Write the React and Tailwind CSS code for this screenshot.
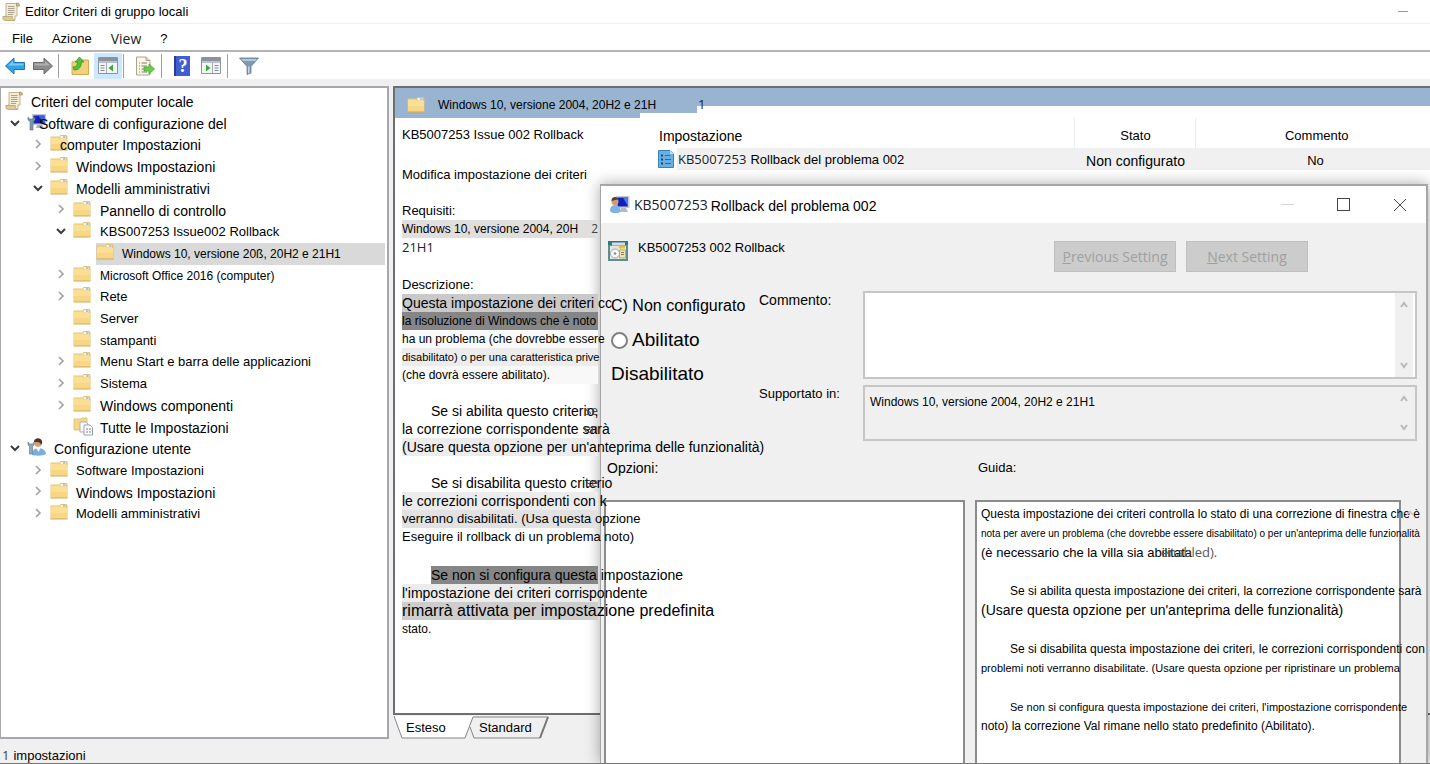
import React, { useState } from 'react';
import clsx from 'clsx';

const tree = [
    { label: 'Criteri del computer locale', icon: 'scroll', pad: 'pl-[4px]', gap: 'gap-[8px]', size: 'text-[14px]' },
    { label: 'Software di configurazione del', icon: 'computer', pad: 'pl-[7px]', gap: '-space-x-2', size: 'text-[14px]', state: 'open' },
    { label: 'computer Impostazioni', icon: 'folder', pad: 'pl-[30px]', gap: '-space-x-2', size: 'text-[14px]', state: 'closed' },
    { label: 'Windows Impostazioni', icon: 'folder', pad: 'pl-[30px]', gap: 'gap-[8px]', size: 'text-[14px]', state: 'closed' },
    { label: 'Modelli amministrativi', icon: 'folder', pad: 'pl-[30px]', gap: 'gap-[8px]', size: 'text-[14px]', state: 'open' },
    { label: 'Pannello di controllo', icon: 'folder', pad: 'pl-[53px]', gap: 'gap-[9px]', size: 'text-[14px]', state: 'closed' },
    { label: 'KBS007253 Issue002 Rollback', icon: 'folder', pad: 'pl-[53px]', gap: 'gap-[9px]', size: 'text-[13px]', state: 'open' },
    { label: 'Windows 10, versione 20ß, 20H2 e 21H1', icon: 'folder', pad: 'pl-[76px]', gap: 'gap-[8px]', size: 'text-[12px]', selected: true },
    { label: 'Microsoft Office 2016 (computer)', icon: 'folder', pad: 'pl-[53px]', gap: 'gap-[9px]', size: 'text-[12px]', state: 'closed' },
    { label: 'Rete', icon: 'folder', pad: 'pl-[53px]', gap: 'gap-[9px]', size: 'text-[13px]', state: 'closed' },
    { label: 'Server', icon: 'folder', pad: 'pl-[53px]', gap: 'gap-[9px]', size: 'text-[13px]' },
    { label: 'stampanti', icon: 'folder', pad: 'pl-[53px]', gap: 'gap-[9px]', size: 'text-[13px]' },
    { label: 'Menu Start e barra delle applicazioni', icon: 'folder', pad: 'pl-[53px]', gap: 'gap-[9px]', size: 'text-[13px]', state: 'closed' },
    { label: 'Sistema', icon: 'folder', pad: 'pl-[53px]', gap: 'gap-[9px]', size: 'text-[13px]', state: 'closed' },
    { label: 'Windows componenti', icon: 'folder', pad: 'pl-[53px]', gap: 'gap-[9px]', size: 'text-[14px]', state: 'closed' },
    { label: 'Tutte le Impostazioni', icon: 'pages', pad: 'pl-[53px]', gap: 'gap-[9px]', size: 'text-[14px]' },
    { label: 'Configurazione utente', icon: 'user', pad: 'pl-[7px]', gap: 'gap-[7px]', size: 'text-[14px]', state: 'open' },
    { label: 'Software Impostazioni', icon: 'folder', pad: 'pl-[30px]', gap: 'gap-[8px]', size: 'text-[13px]', state: 'closed' },
    { label: 'Windows Impostazioni', icon: 'folder', pad: 'pl-[30px]', gap: 'gap-[8px]', size: 'text-[14px]', state: 'closed' },
    { label: 'Modelli amministrativi', icon: 'folder', pad: 'pl-[30px]', gap: 'gap-[8px]', size: 'text-[13px]', state: 'closed' },
];

const description = [
    { lines: [{ text: 'KB5007253 Issue 002 Rollback', cls: 'text-[13px]' }], space: 'mb-[22px]' },
    { lines: [{ text: 'Modifica impostazione dei criteri', cls: 'text-[13px]' }], space: 'mb-[18px]' },
    {
        lines: [
            { text: 'Requisiti:', cls: 'text-[13px]' },
            { text: 'Windows 10, versione 2004, 20H', cls: 'text-[12px] bg-[#e0dfde]', tail: '2' },
            { text: '21H1', cls: "text-[13px] text-[#222] font-medium font-['Open_Sans',sans-serif]" },
        ],
        space: 'mb-[20px]',
    },
    {
        lines: [
            { text: 'Descrizione:', cls: 'text-[13px]' },
            { text: 'Questa impostazione dei criteri cc', cls: 'text-[14px] bg-[#c9c9c9]' },
            { text: 'la risoluzione di Windows che è noto', cls: 'text-[12px] bg-[#868686]' },
            { text: 'ha un problema (che dovrebbe essere', cls: 'text-[12px] bg-[#fafafa]' },
            { text: 'disabilitato) o per una caratteristica prive', cls: 'text-[11px] bg-[#ececec]' },
            { text: '(che dovrà essere abilitato).', cls: 'text-[12px] bg-[#f8f8f8]' },
        ],
        space: 'mb-[18px]',
    },
    {
        lines: [
            { text: 'Se si abilita questo criterio,', cls: 'text-[14px]', indent: true, tail: 'se' },
            { text: 'la correzione corrispondente sarà', cls: 'text-[14px]', tail: 'en' },
            { text: "(Usare questa opzione per un'anteprima delle funzionalità)", cls: 'text-[14px] bg-[#ececec]' },
        ],
        space: 'mb-[18px]',
    },
    {
        lines: [
            { text: 'Se si disabilita questo criterio', cls: 'text-[14px]', indent: true, tail: 'se' },
            { text: 'le correzioni corrispondenti con k', cls: 'text-[14px] bg-[#ececec]' },
            { text: 'verranno disabilitati. (Usa questa opzione', cls: 'text-[13px] bg-[#e2e2e2]' },
            { text: 'Eseguire il rollback di un problema noto)', cls: 'text-[13px]' },
        ],
        space: 'mb-[20px]',
    },
    {
        lines: [
            { text: 'Se non si configura questa impostazione', cls: 'text-[14px] bg-[#868686]', indent: true },
            { text: "l'impostazione dei criteri corrispondente", cls: 'text-[14px] bg-[#ececec]' },
            { text: 'rimarrà attivata per impostazione predefinita', cls: 'text-[16px] bg-[#cdcdcd]' },
            { text: 'stato.', cls: 'text-[12px]' },
        ],
        space: '',
    },
];

const help = [
    [
        { text: 'Questa impostazione dei criteri controlla lo stato di una correzione di finestra che è', cls: 'text-[12px]' },
        { text: "nota per avere un problema (che dovrebbe essere disabilitato) o per un'anteprima delle funzionalità", cls: 'text-[10px]' },
        { text: '(è necessario che la villa sia abilitata', cls: 'text-[13px]', tail: 'enabled).' },
    ],
    [
        { text: 'Se si abilita questa impostazione dei criteri, la correzione corrispondente sarà', cls: 'text-[12px] pl-[29px]' },
        { text: "(Usare questa opzione per un'anteprima delle funzionalità)", cls: 'text-[14px]' },
    ],
    [
        { text: 'Se si disabilita questa impostazione dei criteri, le correzioni corrispondenti con', cls: 'text-[12px] pl-[29px]' },
        { text: 'problemi noti verranno disabilitate. (Usare questa opzione per ripristinare un problema', cls: 'text-[11px]' },
    ],
    [
        { text: "Se non si configura questa impostazione dei criteri, l'impostazione corrispondente", cls: 'text-[11px] pl-[29px]' },
        { text: 'noto) la correzione Val rimane nello stato predefinito (Abilitato).', cls: 'text-[12px]' },
    ],
];

const FolderIcon = () => (
    <svg width="18" height="18" viewBox="0 0 18 18" className="shrink-0">
        <path d="M.500 2.500h9l1-1.500h6l1 1.500V16H.500z" fill="#e3c277" />
        <path d="M10.500 2h5.500v2.500h-5.500z" fill="#fff6d8" />
        <path d="M13 2.500h2.500v1H13z" fill="#5a9bd0" />
        <path d="M1 3.500h8.500l1 1.500H17v10.500H1z" fill="#fbdf95" />
        <path d="M1 10h16v5.500H1z" fill="#f7d684" />
        <path d="M.500 16h17" stroke="#d0ab5c" />
    </svg>
);

const ScrollIcon = () => (
    <svg width="18" height="20" viewBox="0 0 18 20" className="shrink-0">
        <path d="M4 1.500h11V14h-2v4H3v-4h1z" fill="#f3ecd2" stroke="#c0b48e" />
        <path d="M14.500 1c2.500 0 3 1 3 3h-3z" fill="#cdbb84" stroke="#a1925f" strokeWidth=".7" />
        <path d="M.800 14.500h9.500c0 3 1 4 2.500 4H3c-1.500 0-2.200-1-2.200-4z" fill="#dccb98" stroke="#b5a672" strokeWidth=".8" />
        <path d="M6 4.500h6.500M6 6.500h6.500M6 8.500h6.500M6 10.500h6.500M6 12.500h5" stroke="#a9a48f" />
    </svg>
);

const ComputerIcon = () => (
    <svg width="20" height="18" viewBox="0 0 20 18" className="shrink-0">
        <path d="M5 1h14v11H5z" fill="#c3c8d0" />
        <path d="M6.500 2.500h11v8h-11z" fill="#1523b8" />
        <path d="M11 2.500h6.500v8z" fill="#3a62e8" />
        <path d="M1 4v3l2 1.500V17h3V8.500L8 7V4L6.500 6h-4z" fill="#7f97ad" stroke="#5b7186" strokeWidth=".6" />
        <path d="M10 12h5l2 3H9z" fill="#a9b0b8" />
    </svg>
);

const UserIcon = () => (
    <svg width="20" height="18" viewBox="0 0 20 18" className="shrink-0">
        <circle cx="11" cy="5" r="3.800" fill="#d79c6c" />
        <path d="M7 4c0-5 8-5 8.300.500L14 7c0-2-2-3-4-3z" fill="#4a3527" />
        <path d="M5 17c0-5 3-7 6.500-7s7 2 7.500 6c-3 2-10 2-14 1z" fill="#75aee2" />
        <path d="m9 10 2.500 4 2-4z" fill="#fff" />
        <path d="M1 4v3l1.500 1.500V16h3V8.500L7 7V4L6 6H2.500z" fill="#93a9bb" stroke="#5f7588" strokeWidth=".6" />
    </svg>
);

const PagesIcon = () => (
    <svg width="18" height="18" viewBox="0 0 18 18" className="shrink-0 overflow-visible">
        <path d="M1 2h7l1-1h5v12H1z" fill="#f6d788" stroke="#d8b55f" strokeWidth=".7" />
        <path d="M7 5h6l2 2v8H7z" fill="#fff" stroke="#a9adb3" />
        <path d="M11 8h6l2.500 2.500V18H11z" fill="#fff" stroke="#9a9ea5" />
        <path d="M13 12h2m1 0h2m-5 3h2m1 0h2" stroke="#6d7fa0" />
    </svg>
);

const DialogIcon = () => (
    <svg width="20" height="18" viewBox="0 0 20 18" className="shrink-0">
        <path d="M6 0h13.500v12H6z" fill="#c5cbd4" />
        <path d="M7.500 1.500h10.500v9H7.500z" fill="#1120bd" />
        <path d="M13 1.500h5v9z" fill="#4d79ed" />
        <path d="M11 12h5l2 4h-8z" fill="#b5bac1" />
        <circle cx="5" cy="5.500" r="3.500" fill="#d49b6d" />
        <path d="M1.500 5C1 0 8 0 8.500 3.500L5 4z" fill="#563e2e" />
        <path d="M0 15c0-4 2-6 5-6s5 2 6 6c-2 3-9 3-11 0z" fill="#7eb4e5" />
    </svg>
);

const SettingIcon = () => (
    <svg width="20" height="20" viewBox="0 0 20 20" className="shrink-0">
        <path d="M0 0h20v20H0z" fill="#5d8f90" />
        <path d="M0 0h20v4H0z" fill="#2e7a80" />
        <path d="M4 1.500h13v3H4z" fill="#d7dde8" />
        <path d="M2 5h16v13H2z" fill="#e6e6da" />
        <path d="M11 5h6v2.500h-6z" fill="#e8c23a" />
        <circle cx="7" cy="12.500" r="4.500" fill="#f7f7fa" stroke="#a7a3b5" />
        <circle cx="7" cy="12.500" r="1.300" fill="#7f8fa0" />
        <path d="M11.500 9h6v8h-6z" fill="#efe3b2" stroke="#a8955a" strokeWidth=".7" />
        <path d="M13 11.500h3m-3 2h3" stroke="#8c7d4f" />
    </svg>
);

const PolicyIcon = () => (
    <svg width="16" height="18" viewBox="0 0 16 18" className="shrink-0">
        <path d="M.500.500H12l3.500 3.500v13.500H.500z" fill="#66b0e6" stroke="#3c80b8" />
        <path d="M12 .500V4h3.500z" fill="#bfe0f7" />
        <path d="M3 5.500h2m-2 4h2m-2 4h2" stroke="#173f66" strokeWidth="2" />
        <path d="M7 5.500h5m-5 4h6m-6 4h6" stroke="#2c689c" />
    </svg>
);

const icons = { folder: FolderIcon, scroll: ScrollIcon, computer: ComputerIcon, user: UserIcon, pages: PagesIcon };

const Chevron = ({ state }) => (
    <svg width="14" height="14" viewBox="0 0 14 14" className="shrink-0" fill="none">
        {state === 'open' && <path d="m3 4 4 4 4-4" stroke="#3c3c3c" strokeWidth="2" />}
        {state === 'closed' && <path d="m5 2 4 4-4 4" stroke="#a3a3a3" strokeWidth="1.700" />}
    </svg>
);

const BackIcon = () => (
    <svg width="20" height="18" viewBox="0 0 20 18">
        <path d="M.500 9 9 1v4.500h10.500v7H9V17z" fill="#2ea3e6" stroke="#1c75b4" />
        <path d="M3 8.500 8 4v2.500h10.500v2z" fill="#7bcbf5" />
    </svg>
);

const ForwardIcon = () => (
    <svg width="20" height="18" viewBox="0 0 20 18">
        <path d="M19.500 9 11 1v4.500H.500v7H11V17z" fill="#8c8c8c" stroke="#6b6b6b" />
        <path d="M17 8.500 12 4v2.500H1.500v2z" fill="#b0b0b0" />
    </svg>
);

const UpIcon = () => (
    <svg width="18" height="18" viewBox="0 0 18 18">
        <path d="M1 5h8l2-2h6.500v14.500H1z" fill="#f3d07c" stroke="#d2aa50" />
        <path d="M2 10c3 0 4.500-2 4.500-5H4l4.500-5L13 5h-2.500c0 5-3 8.500-7.500 8z" fill="#52c234" stroke="#2f9120" strokeWidth=".7" />
    </svg>
);

const PaneIcon = ({ flip }) => (
    <svg width="20" height="17" viewBox="0 0 20 17" className={clsx(flip && '-scale-x-100')}>
        <path d="M.500.500h19v16H.500z" fill="#f4f5f6" stroke="#8c949d" />
        <path d="M1 1h18v3.500H1z" fill="#8993a0" />
        <path d="M1 5.500h18" stroke="#b9bfc6" />
        <path d="M2.500 8.500h4m-4 2.500h4m-4 2.500h4" stroke="#7c8a9b" />
        <path d="M8.500 6v10" stroke="#a4abb3" />
        <path d="M15 7.500v7L10.500 11z" fill="#3aa935" />
    </svg>
);

const ExportIcon = () => (
    <svg width="20" height="20" viewBox="0 0 20 20">
        <path d="M1.500 1H11l4 3.500V19H1.500z" fill="#fbf7e6" stroke="#aaa588" />
        <path d="M11 1v3.500h4" fill="#ded7b7" stroke="#aaa588" />
        <path d="M4 7h1m1.500 0H12M4 10h1m1.500 0H12M4 13h1m1.500 0H12M4 16h1m1.500 0H12" stroke="#7b7c80" />
        <path d="M9 11h5V8l5.500 5-5.500 5v-3H9z" fill="#63cf4b" stroke="#3ea02b" strokeWidth=".7" />
    </svg>
);

const HelpIcon = () => (
    <span className="flex h-[20px] w-[16px] items-center justify-center border-l-2 border-[#2b3c94] bg-[#3f5fd0] font-['Liberation_Serif',serif] text-[18px] font-bold leading-none text-white">?</span>
);

const FilterIcon = () => (
    <svg width="20" height="18" viewBox="0 0 20 18">
        <path d="M.500 1h19L12 9.500V16l-4 1.500v-8z" fill="#7f9ab0" stroke="#607c94" strokeWidth=".8" />
        <path d="M2 2h16l-1.500 2H4z" fill="#b5c9d8" />
        <path d="M9 9.500h1.500V16l-1.500.500z" fill="#c9d8e3" />
    </svg>
);

const ScrollArrows = () => (
    <div className="flex w-[18px] shrink-0 flex-col items-center justify-between bg-[#f0f0f0] py-[8px]">
        <svg width="8" height="7" viewBox="0 0 8 7" fill="none"><path d="m1 6 3-4 3 4" stroke="#b9b9b9" strokeWidth="2" /></svg>
        <svg width="8" height="7" viewBox="0 0 8 7" fill="none"><path d="m1 1 3 4 3-4" stroke="#b9b9b9" strokeWidth="2" /></svg>
    </div>
);

const TreeRow = ({ item }) => {
    const Icon = icons[item.icon];
    return (
        <li className={clsx('flex items-center', item.pad)}>
            {item.icon !== 'scroll' && <Chevron state={item.state} />}
            <a
                href="#"
                className={clsx(
                    'flex h-full items-start whitespace-nowrap leading-[22px]',
                    item.gap,
                    item.size,
                    item.icon !== 'scroll' && 'ml-[5px]',
                    item.selected && 'mr-[2px] flex-1 bg-[#d9d9d9]',
                )}
            >
                <Icon />
                <span className="relative">{item.label}</span>
            </a>
        </li>
    );
};

const Toolbar = () => (
    <div className="flex h-[27px] items-center bg-white pl-[5px]">
        <button aria-label="Indietro"><BackIcon /></button>
        <button aria-label="Avanti" className="ml-[8px]"><ForwardIcon /></button>
        <span className="ml-[5px] h-[24px] w-px bg-[#a0a0a0]" />
        <button aria-label="Livello superiore" className="ml-[12px]"><UpIcon /></button>
        <button aria-label="Mostra albero" className="ml-[5px] flex h-[26px] w-[28px] items-center justify-center bg-[#cce8ff]"><PaneIcon /></button>
        <span className="ml-px h-[24px] w-px bg-[#a0a0a0]" />
        <button aria-label="Esporta" className="ml-[11px]"><ExportIcon /></button>
        <span className="ml-[6px] h-[24px] w-px bg-[#a0a0a0]" />
        <button aria-label="Guida" className="ml-[12px]"><HelpIcon /></button>
        <button aria-label="Mostra riquadro azioni" className="ml-[11px]"><PaneIcon flip /></button>
        <span className="ml-[6px] h-[24px] w-px bg-[#a0a0a0]" />
        <button aria-label="Filtro" className="ml-[11px]"><FilterIcon /></button>
    </div>
);

const DescriptionLine = ({ line }) => (
    <p className={clsx('relative h-[18px] leading-[18px] whitespace-nowrap', line.indent ? 'ml-[29px] w-[167px]' : 'w-[196px]', line.cls)}>
        {line.text}
        {line.tail && (
            <span className="absolute top-0 right-0 font-['Open_Sans',sans-serif] text-[12px] text-[#444]">{line.tail}</span>
        )}
    </p>
);

const SettingsTable = () => (
    <table className="w-full table-fixed border-collapse text-[13px] leading-[18px]">
        <thead>
            <tr className="h-[30px]">
                <th className="pt-[6px] pl-[4px] text-left text-[14px] font-normal">Impostazione</th>
                <th className="w-[121px] border-x border-[#ececec] pt-[5px] pl-[2px] font-normal">Stato</th>
                <th className="w-[235px] pt-[5px] pl-[8px] font-normal">Commento</th>
            </tr>
        </thead>
        <tbody>
            <tr className="h-[22px]">
                <td className="p-0">
                    <div className="flex h-[22px] items-center pl-[3px]">
                        <PolicyIcon />
                        <div className="ml-[3px] flex h-full flex-1 items-center gap-[4px] bg-[#f0f0f0] pl-px">
                            <span className="font-['Open_Sans',sans-serif] font-medium text-[#222]">KB5007253</span>
                            <span className="pt-[2px]">Rollback del problema 002</span>
                        </div>
                    </div>
                </td>
                <td className="bg-[#f0f0f0] p-0 pt-[3px] pl-[2px] text-center text-[14px]">Non configurato</td>
                <td className="bg-[#f0f0f0] p-0 pt-[3px] pl-[6px] text-center">No</td>
            </tr>
        </tbody>
    </table>
);

const ViewTabs = () => (
    <div className="flex h-[24px] items-start pt-px text-[13px]">
        <button className="relative h-[23px] w-[76px] pt-px pl-[13px] text-left">
            <svg width="84" height="23" viewBox="0 0 84 23" className="absolute top-0 left-0">
                <path d="M1 0h79l-8 22H9z" fill="#fff" />
                <path d="M1 0l8 22h63l8-21" fill="none" stroke="#858585" />
            </svg>
            <span className="relative">Esteso</span>
        </button>
        <button className="relative h-[23px] w-[80px] pt-px pl-[10px] text-left">
            <svg width="80" height="23" viewBox="0 0 80 23" className="absolute top-0 left-0">
                <path d="M1 11l4 11h66l8-21H4" fill="none" stroke="#858585" />
                <path d="M71 22l8-21" stroke="#777" strokeWidth="2" />
            </svg>
            <span className="relative">Standard</span>
        </button>
    </div>
);

const PolicyDialog = () => {
    const [state, setState] = useState('none');
    const [comment, setComment] = useState('');

    return (
        <section className="absolute top-[184px] right-[2px] bottom-0 left-[600px] z-10 flex flex-col border-2 border-b-0 border-l border-[#a6a6a6] bg-[#f0f0f0] shadow-[0_0_14px_rgba(0,0,0,0.35)]">
            <header className="flex h-[37px] shrink-0 items-center bg-white pl-[9px]">
                <DialogIcon />
                <span className="ml-[4px] font-['Open_Sans',sans-serif] text-[14px] text-[#222]">KB5007253</span>
                <h2 className="ml-[3px] pt-[3px] text-[14px]">Rollback del problema 002</h2>
                <div className="mr-[19px] ml-auto flex items-center gap-[43px]">
                    <button aria-label="Riduci a icona" className="h-px w-[13px] bg-[#d5d5d5]" />
                    <button aria-label="Ingrandisci" className="h-[13px] w-[13px] border border-[#444]" />
                    <button aria-label="Chiudi">
                        <svg width="14" height="14" viewBox="0 0 14 14"><path d="m1 1 12 12M13 1 1 13" stroke="#444" /></svg>
                    </button>
                </div>
            </header>

            <div className="flex items-start pt-[18px] pl-[7px]">
                <SettingIcon />
                <span className="ml-[10px] text-[13px] leading-[14px]">KB5007253 002 Rollback</span>
                <div className="mr-[118px] ml-auto flex gap-[10px] font-['Open_Sans',sans-serif] text-[14px] text-[#a0a0a0] [text-shadow:1px_1px_0_#fff]">
                    <button disabled className="h-[31px] w-[122px] border border-[#bfbfbf] bg-[#cccccc]"><u>P</u>revious Setting</button>
                    <button disabled className="h-[31px] w-[122px] border border-[#bfbfbf] bg-[#cccccc]"><u>N</u>ext Setting</button>
                </div>
            </div>

            <div className="mt-[19px] grid grid-cols-[148px_104px_1fr] pr-[9px] pl-[10px]">
                <fieldset className="row-span-2 flex flex-col gap-[6px] pt-px leading-[28px] whitespace-nowrap">
                    <label className="relative text-[16px]">
                        <input type="radio" name="stato" className="sr-only" checked={state === 'none'} onChange={() => setState('none')} />
                        C) Non configurato
                    </label>
                    <label className="flex items-center gap-[4px] text-[19px]">
                        <input
                            type="radio"
                            name="stato"
                            className="h-[17px] w-[17px] appearance-none rounded-full border-2 border-[#808080] bg-white"
                            checked={state === 'on'}
                            onChange={() => setState('on')}
                        />
                        Abilitato
                    </label>
                    <label className="relative text-[19px]">
                        <input type="radio" name="stato" className="sr-only" checked={state === 'off'} onChange={() => setState('off')} />
                        Disabilitato
                    </label>
                </fieldset>
                <label htmlFor="commento" className="text-[14px] leading-[18px]">Commento:</label>
                <div className="flex h-[88px] border-2 border-[#c6c6c6] bg-white pr-[2px]">
                    <textarea id="commento" value={comment} onChange={(e) => setComment(e.target.value)} className="min-w-0 flex-1 resize-none outline-none" />
                    <ScrollArrows />
                </div>
                <label htmlFor="supportato" className="mt-[6px] text-[13px] leading-[18px]">Supportato in:</label>
                <div className="mt-[6px] flex h-[56px] border-2 border-[#c6c6c6] pr-[2px]">
                    <textarea id="supportato" readOnly value="Windows 10, versione 2004, 20H2 e 21H1" className="min-w-0 flex-1 resize-none pt-[6px] pl-[5px] text-[12px] leading-[18px] outline-none" />
                    <ScrollArrows />
                </div>
            </div>

            <div className="mt-[18px] grid min-h-0 flex-1 grid-cols-[361fr_426fr] grid-rows-[18px_1fr] gap-x-[10px] gap-y-[23px] pr-[25px] pl-[3px]">
                <h3 className="pl-[3px] text-[14px] leading-[18px]">Opzioni:</h3>
                <h3 className="pl-[3px] text-[13px] leading-[18px]">Guida:</h3>
                <div className="border-2 border-b-0 border-[#8c8c8c] bg-white" />
                <div className="relative flex min-w-0 flex-col gap-[20px] border-2 border-b-0 border-[#8c8c8c] bg-white pt-[3px] pl-[4px]">
                    {help.map((block, i) => (
                        <div key={i}>
                            {block.map((line) => (
                                <p key={line.text} className={clsx('h-[19px] leading-[19px] whitespace-nowrap', line.cls)}>
                                    {line.text}
                                    {line.tail && <span className="-ml-[31px] font-['Open_Sans',sans-serif] font-medium text-[#555]">{line.tail}</span>}
                                </p>
                            ))}
                        </div>
                    ))}
                    <svg width="8" height="6" viewBox="0 0 8 6" fill="none" className="absolute top-[8px] -right-[15px]">
                        <path d="m1 5 3-3.500L7 5" stroke="#c4c4c4" strokeWidth="1.500" />
                    </svg>
                </div>
            </div>
        </section>
    );
};

const App = () => {
    return (
        <div className="relative flex h-screen flex-col overflow-hidden border-b border-[#777] bg-[#f0f0f0] font-['Liberation_Sans',Arial,sans-serif] text-black">
            <header className="flex h-[24px] shrink-0 items-center border-b border-[#f0f0f0] bg-white pr-[22px] pl-[2px]">
                <ScrollIcon />
                <h1 className="ml-[5px] text-[13px]">Editor Criteri di gruppo locali</h1>
                <button aria-label="Riduci a icona" className="ml-auto h-px w-[10px] bg-[#999]" />
            </header>
            <nav className="flex h-[28px] shrink-0 items-center gap-[19px] border-b-2 border-[#b4b4b4] bg-white pt-[4px] pl-[12px] text-[13px]">
                <button>File</button>
                <button>Azione</button>
                <button className="font-['Open_Sans',sans-serif] text-[14px] leading-[16px] text-[#222]">View</button>
                <button>?</button>
            </nav>
            <Toolbar />

            <main className="mt-[7px] flex min-h-0 flex-1 gap-[4px]">
                <aside className="w-[389px] shrink-0 border border-t-2 border-r-2 border-b-2 border-[#a5a8ad] bg-white pt-[3px]">
                    <ul className="grid h-[434px] auto-rows-fr">
                        {tree.map((item, i) => (
                            <TreeRow key={i} item={item} />
                        ))}
                    </ul>
                </aside>

                <div className="flex min-w-0 flex-1 flex-col">
                    <div className="flex min-h-0 flex-1 flex-col border-t-2 border-b-2 border-l-2 border-[#6e6e6e] bg-white">
                        <div className="flex h-[30px] shrink-0 items-start text-[12px]">
                            <div className="relative z-[1] flex h-[30px] w-[245px] items-center gap-[13px] bg-[#99b4d1] pt-[3px] pl-[12px] whitespace-nowrap">
                                <FolderIcon />
                                <span className="pt-px">Windows 10, versione 2004, 20H2 e 21H</span>
                            </div>
                            <div className="h-[25px] w-[57px] bg-[#99b4d1]" />
                            <div className="h-[18px] flex-1 bg-[#99b4d1] pl-px font-['Open_Sans',sans-serif] text-[13px] leading-[32px] font-medium text-[#222]">1</div>
                        </div>
                        <div className="flex min-h-0 flex-1">
                            <article className="relative z-20 w-[260px] shrink-0 pt-[8px] pl-[7px]">
                                {description.map((block, i) => (
                                    <div key={i} className={block.space}>
                                        {block.lines.map((line) => (
                                            <DescriptionLine key={line.text} line={line} />
                                        ))}
                                    </div>
                                ))}
                            </article>
                            <div className="min-w-0 flex-1">
                                <SettingsTable />
                            </div>
                        </div>
                    </div>
                    <ViewTabs />
                </div>
            </main>

            <footer className="h-[24px] shrink-0 pl-[2px] text-[13px] leading-[32px]">
                <span className="mr-[4px] font-['Open_Sans',sans-serif] text-[#444]">1</span>
                impostazioni
            </footer>

            <PolicyDialog />
        </div>
    );
};

export default App;
